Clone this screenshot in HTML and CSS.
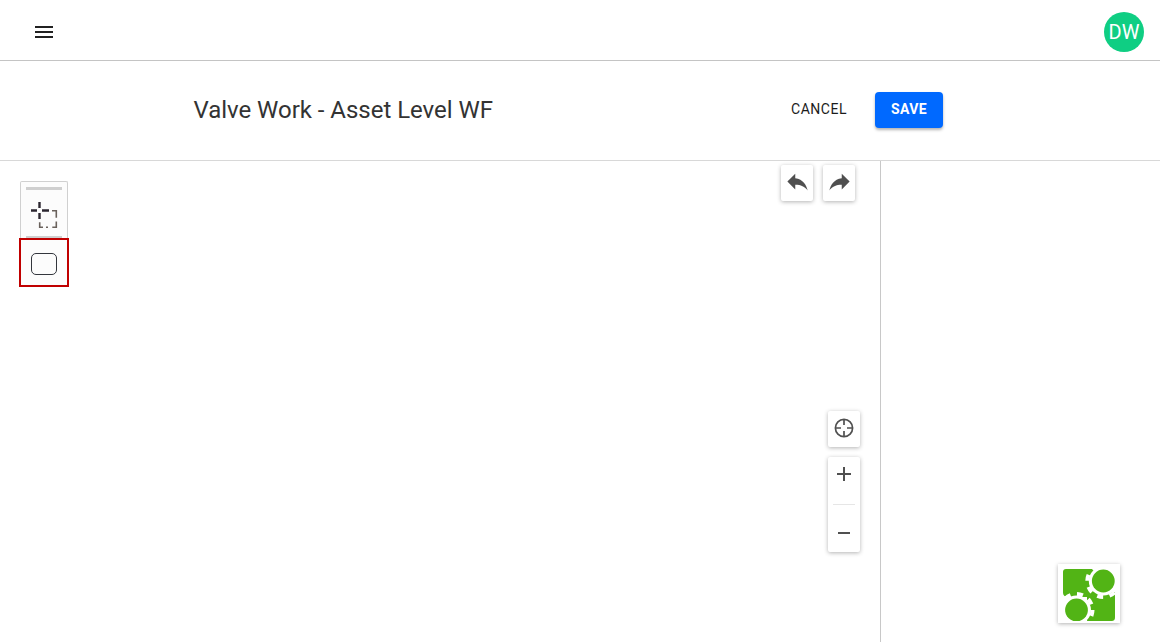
FILE: index.html
```html
<!DOCTYPE html>
<html lang="en">
<head>
<meta charset="utf-8">
<title>Valve Work - Asset Level WF</title>
<link rel="stylesheet" href="styles.css">
</head>
<body>
<div class="app">
  <header class="topbar">
    <button class="menu-btn" aria-label="Menu">
      <svg width="24" height="24" viewBox="0 0 24 24"><path d="M3 18h18v-2H3v2zm0-5h18v-2H3v2zm0-7v2h18V6H3z" fill="#212121"/></svg>
    </button>
    <div class="avatar">DW</div>
  </header>
  <section class="titlebar">
    <h1 class="title">Valve Work - Asset Level WF</h1>
    <div class="actions">
      <button class="btn-cancel">CANCEL</button>
      <button class="btn-save">SAVE</button>
    </div>
  </section>
  <main class="workspace">
    <div class="canvas">
      <div class="palette">
        <div class="palette-handle"></div>
        <div class="palette-tool">
          <svg width="28" height="28" viewBox="0 0 28 28" fill="none">
            <path d="M9.500 2v6M9.500 13v6M1 10.500h6M12 10.500h7" stroke="#2b2630" stroke-width="2.400"/>
            <path d="M22 10.700h4.300v7M26.300 21.500v5.800h-4M18 27.300h-2M13 27.300H9.700v-5" stroke="#6a625c" stroke-width="1.600"/>
          </svg>
        </div>
        <div class="palette-handle palette-handle-end"></div>
        <div class="palette-tool palette-tool-active">
          <span class="task-shape"></span>
        </div>
      </div>
      <div class="history">
        <button class="float-btn" aria-label="Undo">
          <svg class="history-icon" width="27" height="27" viewBox="0 0 24 24"><path d="M10 9V5l-7 7 7 7v-4.100c5 0 8.500 1.600 11 5.100-1-5-4-10-11-11z" fill="#4f4f4f"/></svg>
        </button>
        <button class="float-btn" aria-label="Redo">
          <svg class="history-icon" width="27" height="27" viewBox="0 0 24 24"><path d="M14 9V5l7 7-7 7v-4.100c-5 0-8.500 1.600-11 5.100 1-5 4-10 11-11z" fill="#4f4f4f"/></svg>
        </button>
      </div>
      <div class="zoom-controls">
        <button class="float-btn" aria-label="Fit to view">
          <svg class="fit-icon" width="20" height="20" viewBox="0 0 20 20" fill="none" stroke="#505050" stroke-width="1.700"><circle cx="10" cy="10" r="8.600"/><path d="M10 2v5M10 13v5M2 10h5M13 10h5"/></svg>
        </button>
        <div class="zoom-group">
          <button class="zoom-step zoom-step-in" aria-label="Zoom in">
            <svg width="14" height="14" viewBox="0 0 14 14"><path d="M6 0h2v6h6v2H8v6H6V8H0V6h6z" fill="#505050"/></svg>
          </button>
          <div class="zoom-divider"></div>
          <button class="zoom-step zoom-step-out" aria-label="Zoom out">
            <svg width="14" height="14" viewBox="0 0 14 14"><path d="M1 6h12v2H1z" fill="#505050"/></svg>
          </button>
        </div>
      </div>
    </div>
    <aside class="sidepanel">
      <div class="logo-tile">
        <svg width="52" height="52" viewBox="0 0 52 52">
          <path d="M3 0h28v28H4c-2 0-4-2-4-4V3C0 1 1 0 3 0z" fill="#52b415"/>
          <path d="M24 23h28v25c0 3-1 4-4 4H24z" fill="#52b415"/>
          <circle cx="40.300" cy="12" r="14.500" fill="#fff"/>
          <circle cx="40.300" cy="12" r="16" fill="none" stroke="#fff" stroke-width="4" stroke-dasharray="6 6.570"/>
          <circle cx="13.500" cy="41" r="14.500" fill="#fff"/>
          <circle cx="13.500" cy="41" r="16" fill="none" stroke="#fff" stroke-width="4" stroke-dasharray="6 6.570"/>
          <circle cx="40.300" cy="12" r="11.400" fill="#52b415"/>
          <circle cx="13.500" cy="41" r="11.400" fill="#52b415"/>
        </svg>
      </div>
    </aside>
  </main>
</div>
</body>
</html>
```
FILE: styles.css
```css
* { box-sizing: border-box; }
html, body { margin: 0; padding: 0; height: 100%; overflow: hidden; background: #fff; }
body { font-family: Roboto, "Liberation Sans", sans-serif; color: #333; }
button { font-family: inherit; border: 0; background: none; padding: 0; cursor: pointer; }
.app { display: flex; flex-direction: column; height: 642px; }

.topbar { height: 61px; flex: none; display: flex; align-items: center; justify-content: space-between; padding: 4px 16px 0 32px; border-bottom: 1px solid #c4c4c4; }
.menu-btn { width: 24px; height: 24px; display: flex; }
.avatar { width: 40px; height: 40px; border-radius: 50%; background: #0fce83; color: #fff; font-size: 20px; display: flex; align-items: center; justify-content: center; }

.titlebar { height: 100px; flex: none; display: flex; align-items: center; padding: 0 217px 2px 193.5px; justify-content: space-between; border-bottom: 1px solid #d8d8d8; }
.title { margin: 0; font-size: 24px; font-weight: 400; letter-spacing: -.03px; color: #333; }
.actions { display: flex; align-items: center; gap: 12px; }
.btn-cancel { width: 88px; height: 36px; padding-bottom: 2px; font-size: 14px; font-weight: 400; letter-spacing: .5px; color: #1c1c1c; }
.btn-save { width: 68px; height: 36px; padding-bottom: 2px; background: #0069ff; color: #fff; font-size: 14px; font-weight: 700; letter-spacing: .4px; border-radius: 4px; box-shadow: 0 2px 3px rgba(0,0,0,.3); }

.workspace { flex: 1; display: flex; min-height: 0; }
.canvas { width: 880px; flex: none; position: relative; }
.sidepanel { flex: 1; position: relative; border-left: 1px solid #c8c8c8; }

.palette { position: absolute; left: 20px; top: 20px; width: 48px; border: 1px solid #d0d0d0; border-bottom: 0; border-radius: 2px 2px 0 0; background: #fcfcfc; }
.palette-handle { height: 3px; margin: 5px 5px 0; background: #cfcfcf; }
.palette-handle-end { height: 2px; margin-top: -1px; }
.palette-tool { height: 47px; display: flex; align-items: center; justify-content: center; }
.palette-tool-active { height: 49px; padding-top: 2px; margin: 0 -2px; border: 2px solid #c00000; position: relative; }
.task-shape { width: 26px; height: 22px; border: 1.5px solid #33363d; border-radius: 5px; }

.history { position: absolute; top: 4px; left: 781px; display: flex; gap: 10px; }
.history-icon { margin-bottom: 3px; flex: none; }
.float-btn { width: 32px; height: 36px; background: #fff; border-radius: 2px; display: flex; align-items: center; justify-content: center; box-shadow: 0 1px 4px rgba(0,0,0,.3); }
.fit-icon { margin-bottom: 2px; }
.zoom-controls { position: absolute; left: 828px; top: 250px; display: flex; flex-direction: column; gap: 10px; }
.zoom-group { width: 32px; height: 95px; background: #fff; border-radius: 2px; box-shadow: 0 1px 4px rgba(0,0,0,.3); display: flex; flex-direction: column; align-items: center; }
.zoom-step { width: 32px; height: 47px; flex: none; display: flex; justify-content: center; }
.zoom-step-in { padding-top: 10px; }
.zoom-step-out { padding-top: 21px; }
.zoom-divider { width: 22px; height: 1px; background: #e6e6e6; }

.logo-tile { position: absolute; right: 40px; bottom: 19px; width: 62px; height: 59px; padding-top: 3px; background: #fff; box-shadow: 0 1px 4px rgba(0,0,0,.3); display: flex; align-items: center; justify-content: center; }
```
